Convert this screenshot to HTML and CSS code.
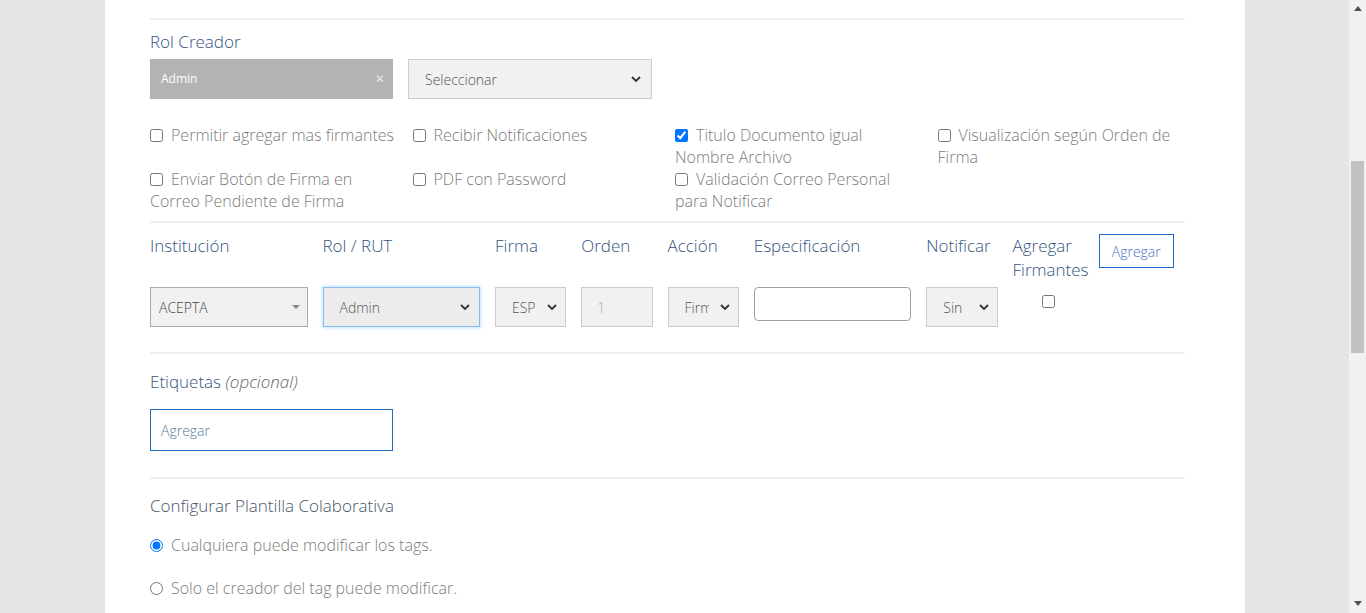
FILE: index.html
```html
<!DOCTYPE html>
<html lang="es">
<head>
<meta charset="utf-8">
<title>Plantilla</title>
<link rel="stylesheet" href="styles.css">
</head>
<body>
<div class="page">
  <div class="inner">
    <div class="divider first"></div>

    <div class="label rol-label">Rol Creador</div>
    <div class="rol-row">
      <div class="chip-box"><span>Admin</span><span class="chip-x">×</span></div>
      <div class="sel sel-select">
        <span>Seleccionar</span>
        <svg class="chev" width="10" height="6" viewBox="0 0 10 6"><path d="M1 1 L5 5 L9 1" fill="none" stroke="#333" stroke-width="1.8"/></svg>
      </div>
    </div>

    <div class="opts">
      <label class="opt"><input type="checkbox">Permitir agregar mas firmantes</label>
      <label class="opt"><input type="checkbox">Recibir Notificaciones</label>
      <label class="opt"><input type="checkbox" checked>Titulo Documento igual Nombre Archivo</label>
      <label class="opt"><input type="checkbox">Visualización según Orden de Firma</label>
      <label class="opt"><input type="checkbox">Enviar Botón de Firma en Correo Pendiente de Firma</label>
      <label class="opt"><input type="checkbox">PDF con Password</label>
      <label class="opt"><input type="checkbox">Validación Correo Personal para Notificar</label>
    </div>

    <div class="divider d2"></div>

    <div class="signers">
      <div class="hcell">Institución</div>
      <div class="hcell">Rol / RUT</div>
      <div class="hcell">Firma</div>
      <div class="hcell">Orden</div>
      <div class="hcell">Acción</div>
      <div class="hcell">Especificación</div>
      <div class="hcell">Notificar</div>
      <div class="hcell">Agregar Firmantes</div>
      <div class="hcell"><button class="btn-add">Agregar</button></div>

      <div class="cell">
        <div class="sel sel-inst">
          <span>ACEPTA</span>
          <svg class="tri" width="8" height="4" viewBox="0 0 8 4"><path d="M0 0 L8 0 L4 4 Z" fill="#888"/></svg>
        </div>
      </div>
      <div class="cell">
        <div class="sel sel-rol">
          <span>Admin</span>
          <svg class="chev" width="10" height="6" viewBox="0 0 10 6"><path d="M1 1 L5 5 L9 1" fill="none" stroke="#333" stroke-width="1.8"/></svg>
        </div>
      </div>
      <div class="cell">
        <div class="sel sel-small">
          <span>ESP</span>
          <svg class="chev" width="10" height="6" viewBox="0 0 10 6"><path d="M1 1 L5 5 L9 1" fill="none" stroke="#333" stroke-width="1.8"/></svg>
        </div>
      </div>
      <div class="cell">
        <div class="sel sel-small orden"><span>1</span></div>
      </div>
      <div class="cell">
        <div class="sel sel-small">
          <span class="clip">Firma</span>
          <svg class="chev" width="10" height="6" viewBox="0 0 10 6"><path d="M1 1 L5 5 L9 1" fill="none" stroke="#333" stroke-width="1.8"/></svg>
        </div>
      </div>
      <div class="cell">
        <div class="text-input"></div>
      </div>
      <div class="cell">
        <div class="sel sel-small">
          <span class="clip">Sin</span>
          <svg class="chev" width="10" height="6" viewBox="0 0 10 6"><path d="M1 1 L5 5 L9 1" fill="none" stroke="#333" stroke-width="1.8"/></svg>
        </div>
      </div>
      <div class="cell center"><input type="checkbox" class="cb-add"></div>
      <div class="cell"></div>
    </div>

    <div class="divider d3"></div>

    <div class="label tags-label">Etiquetas <em>(opcional)</em></div>
    <div class="tags-input"><span>Agregar</span></div>

    <div class="divider d4"></div>

    <div class="label conf-label">Configurar Plantilla Colaborativa</div>
    <label class="radio r1"><input type="radio" name="collab" checked>Cualquiera puede modificar los tags.</label>
    <label class="radio r2"><input type="radio" name="collab">Solo el creador del tag puede modificar.</label>
  </div>
</div>

<div class="scrollbar">
  <svg class="sb-up" width="8" height="5" viewBox="0 0 8 5"><path d="M0 5 L4 0 L8 5 Z" fill="#505050"/></svg>
  <div class="sb-thumb"></div>
  <svg class="sb-down" width="8" height="5" viewBox="0 0 8 5"><path d="M0 0 L8 0 L4 5 Z" fill="#505050"/></svg>
</div>
</body>
</html>
```

FILE: styles.css
```css
html, body {
  margin: 0;
  padding: 0;
}
body {
  background: #e5e5e5;
  font-family: "Open Sans", "Noto Sans", sans-serif;
  font-weight: 300;
  overflow: hidden;
  height: 613px;
}
.page {
  width: 1140px;
  margin-left: 105px;
  background: #fff;
  min-height: 613px;
}
.inner {
  padding: 18px 45px 0 45px;
  width: 1035px;
}
.divider {
  height: 2px;
  background: #f0f0f0;
}
.label {
  font-size: 17px;
  line-height: 22px;
  font-weight: 300;
  color: #34557e;
}
.label em {
  color: #666;
  font-style: italic;
}
.rol-label {
  margin-top: 11px;
}
.rol-row {
  display: flex;
  gap: 15px;
  margin-top: 6px;
}
.chip-box {
  width: 243px;
  height: 40px;
  box-sizing: border-box;
  background: #b3b3b3;
  color: #fff;
  font-size: 12px;
  font-weight: 400;
  display: flex;
  align-items: center;
  justify-content: space-between;
  padding: 0 9px 2px 11px;
}
.chip-x {
  color: #eee;
  font-size: 15px;
}
.sel {
  box-sizing: border-box;
  height: 40px;
  background: #f1f1f1;
  border: 1px solid #ccc;
  display: flex;
  align-items: center;
  justify-content: space-between;
  font-size: 14px;
  color: #555;
  overflow: hidden;
}
.sel-select {
  width: 244px;
  padding: 0 10px 0 16px;
}
.chev {
  flex: none;
}
.opts {
  margin-top: 25px;
  display: grid;
  grid-template-columns: repeat(4, 247.5px);
  column-gap: 15px;
  font-size: 16px;
  line-height: 22px;
  color: #7b7b7b;
}
.opt input, .radio input {
  margin: 0 8px 0 0;
  width: 13px;
  height: 13px;
  vertical-align: -1px;
}
.d2 {
  margin-top: 9px;
}
.signers {
  margin-top: 11px;
  display: grid;
  grid-template-columns: 172.5px 172.5px 86.25px 86.25px 86.25px 172.5px 86.25px 86.25px 86.25px;
  row-gap: 5px;
  align-items: start;
}
.hcell, .cell {
  padding-right: 15px;
  box-sizing: border-box;
}
.hcell {
  font-size: 17px;
  line-height: 24px;
  font-weight: 300;
  color: #34557e;
}
.btn-add {
  width: 75px;
  height: 34px;
  background: #fff;
  border: 1px solid #1f6cc4;
  color: #4a6fc2;
  font-family: "Open Sans", "Noto Sans", sans-serif;
  font-weight: 300;
  font-size: 14px;
  padding: 0;
  cursor: pointer;
}
.sel-inst {
  border-color: #aaa;
  color: #444;
  padding: 0 7px 0 8px;
}
.sel-rol {
  background: #ececec;
  border-color: #86bcf0;
  box-shadow: 0 0 3px 1px rgba(128, 189, 255, 0.45);
  padding: 0 9px 0 16px;
}
.sel-small {
  padding: 0 8px 0 16px;
}
.sel-small .clip {
  width: 24px;
  overflow: hidden;
  white-space: nowrap;
}
.orden {
  color: #aaa;
  justify-content: flex-start;
  padding-left: 15px;
}
.text-input {
  height: 34px;
  box-sizing: border-box;
  border: 1px solid #a0a0a0;
  border-radius: 4px;
  background: #fff;
}
.center {
  display: flex;
  justify-content: center;
  padding-top: 8px;
  padding-right: 15px;
}
.cb-add {
  margin: 0;
  width: 13px;
  height: 13px;
}
.d3 {
  margin-top: 25px;
}
.tags-label {
  margin-top: 17px;
}
.tags-input {
  margin-top: 16px;
  width: 243px;
  height: 42px;
  box-sizing: border-box;
  border: 1px solid #1f6cc4;
  display: flex;
  align-items: center;
  padding-left: 10px;
  font-size: 14px;
  color: #5d78a0;
}
.d4 {
  margin-top: 26px;
}
.conf-label {
  margin-top: 16px;
  color: #46566a;
}
.radio {
  display: block;
  font-size: 16px;
  line-height: 22px;
  color: #7b7b7b;
}
.r1 {
  margin-top: 17px;
}
.r2 {
  margin-top: 21px;
}
.scrollbar {
  position: fixed;
  top: 0;
  right: 0;
  width: 17px;
  height: 613px;
  background: #f1f1f1;
}
.sb-up {
  position: absolute;
  top: 6px;
  left: 5px;
}
.sb-down {
  position: absolute;
  top: 601px;
  left: 5px;
}
.sb-thumb {
  position: absolute;
  top: 161px;
  left: 2px;
  width: 13px;
  height: 192px;
  background: #c1c1c1;
}
```
